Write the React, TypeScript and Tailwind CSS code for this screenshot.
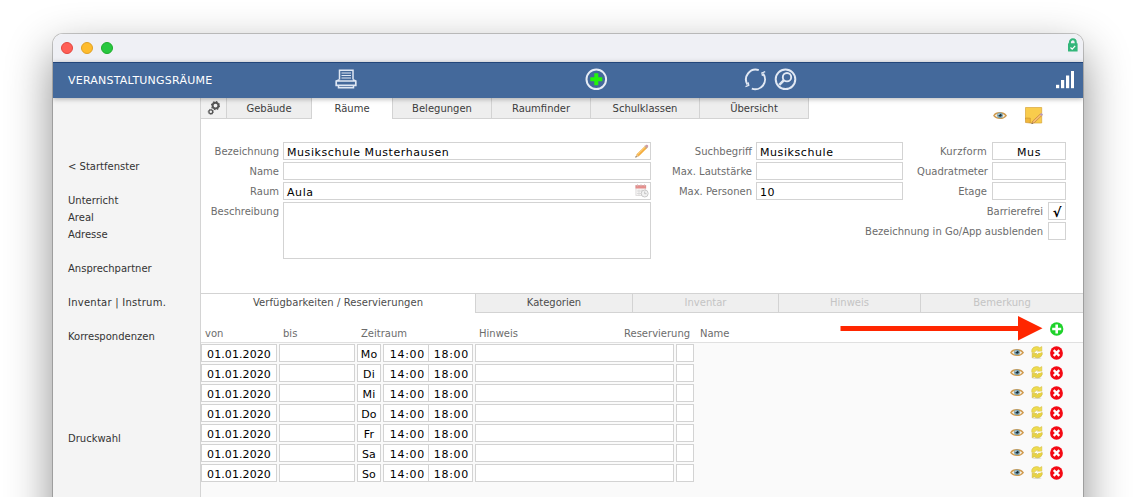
import React from "react";

const FONT = "font-['DejaVu_Sans',sans-serif]";

function Printer() {
  return (
    <svg className="-mt-[3px]" width="22" height="20" viewBox="0 0 22 20" fill="none" stroke="#dfe7f3" strokeWidth="1.5">
      <path d="M4.500 10.500V1.200h13.500V10.500" strokeWidth="1.500" />
      <path d="M6.500 4h9.500M6.500 6.500h9.500M6.500 9h9.500" strokeWidth="1.100" />
      <path d="M4.500 10.800L1.200 12v4.300h19.600V12L18 10.800M2 12h18" strokeWidth="1.700" />
      <path d="M3.500 16v2.700h15V16" />
    </svg>
  );
}

function Eye() {
  return (
    <svg width="14" height="9" viewBox="0 0 14 9">
      <path d="M.8 4.700C3 .8 10.500.8 13.200 4.600 10.500 8.400 3.500 8.400.8 4.700z" fill="#f4efe3" stroke="#cf9a4e" strokeWidth="1.300" />
      <circle cx="7" cy="4.300" r="2.900" fill="#7ba3b1" />
      <circle cx="7.200" cy="4.300" r="1.400" fill="#1c2d36" />
      <circle cx="6" cy="3.200" r=".7" fill="#d5e6ec" />
    </svg>
  );
}

function Sync() {
  return (
    <svg width="12" height="13" viewBox="0 0 12 13">
      <ellipse cx="6" cy="12.200" rx="4.500" ry=".8" fill="#dddcd0" />
      <path d="M.8 6.300V3.800Q2 .6 5.500.6 7.500.6 8.700 1.800L10.800.6V5.300H6.300L7.400 4.100Q4.800 3.200 4 6.300z" fill="#eedc50" stroke="#d6c045" strokeWidth=".6" />
      <path d="M11.200 6.500V8.600Q10 11.800 6.500 11.800 4.500 11.800 3.300 10.700L1.200 11.800V7.200H5.700L4.600 8.500Q7.200 9.500 8 6.500z" fill="#e8d343" stroke="#d0b93a" strokeWidth=".6" />
      <path d="M3.800 6.400h5l1.700-.6" fill="none" stroke="#fdfcf0" strokeWidth="1.100" />
    </svg>
  );
}

function Delete() {
  return (
    <svg width="13" height="14" viewBox="0 0 13 14">
      <ellipse cx="6.500" cy="7" rx="6.400" ry="6.800" fill="#f40a14" />
      <path d="M3.700 4.100l5.600 5.800M9.300 4.100L3.700 9.900" stroke="#fff" strokeWidth="2.300" />
    </svg>
  );
}

function Pencil() {
  return (
    <svg className="-mt-px" width="14" height="14" viewBox="0 0 14 14">
      <path d="M.5 13.500l1.300-3.500L10.500 1.500l2.200 2-8.600 8.500z" fill="#f4ac3d" />
      <path d="M2.500 10.700l8.500-8.400" stroke="#ffd581" strokeWidth="1" />
      <path d="M.5 13.500l1.100-3.300 2.200 2.100z" fill="#e5c69c" />
      <path d="M.4 13.600l.5-1.500 1 1z" fill="#444" />
      <path d="M10 2L11.200.8q1.200-.5 2.200 1.200L12.300 4z" fill="#cc9ba8" />
      <path d="M9.700 2.200l2.300 2.200" stroke="#a5abb5" />
    </svg>
  );
}

function Calendar() {
  return (
    <svg width="14" height="14" viewBox="0 0 14 14">
      <rect x=".9" y="1.500" width="9.800" height="10" fill="#f6f4f4" stroke="#dad8d8" strokeWidth=".8" />
      <path d="M.5 1.200h10.600v3.400H.5z" fill="#e58e8c" />
      <path d="M2.500.4v2M6 .4v2M9.500.4v2" stroke="#d3b6b6" />
      <path d="M2 7h8M2 9.500h8M4 5.500v6M7 5.500v6" stroke="#d2d2d2" strokeWidth=".7" />
      <circle cx="9.700" cy="9.500" r="3.500" fill="#f1f1f1" stroke="#c9c9c9" />
      <path d="M9.700 7.500v2.200h1.800" fill="none" stroke="#b5b5b5" strokeWidth=".8" />
    </svg>
  );
}

function Note() {
  return (
    <svg width="19" height="18" viewBox="0 0 19 18">
      <path d="M.5.500h16.200v15.500H5L.5 12z" fill="#f9cc4c" stroke="#d9a63b" strokeWidth=".7" />
      <path d="M.5 11l4.800.2V16L.5 15.500z" fill="#f0b73a" stroke="#c98f2a" strokeWidth=".6" />
      <path d="M6.800 16.600l1-2.600 7.500-7 1.500 1.500-7.400 7.100z" fill="#f6bd70" stroke="#b8753a" strokeWidth=".6" />
      <path d="M14.800 7.200l1.400-1.300 1.900 1.500-1.500 1.700z" fill="#b79bbf" />
      <path d="M6.500 17l.5-1.300.9.800z" fill="#444" />
    </svg>
  );
}

function Gears() {
  return (
    <svg width="14" height="15" viewBox="0 0 14 15" fill="none" stroke="#555">
      <circle cx="8.500" cy="4.600" r="2.900" strokeWidth="1.900" />
      <circle cx="8.500" cy="4.600" r="4" strokeWidth="1.100" strokeDasharray="1.570 1.570" />
      <circle cx="3.800" cy="10.800" r="1.900" strokeWidth="1.300" />
      <circle cx="3.800" cy="10.800" r="2.700" strokeWidth=".7" strokeDasharray="1.060 1.060" />
    </svg>
  );
}

function AddCircle() {
  return (
    <svg className="-mt-[3px]" width="24" height="24" viewBox="0 0 24 24">
      <circle cx="12.300" cy="12.300" r="9.800" fill="none" stroke="#e6ecf5" strokeWidth="2" />
      <path d="M12.300 6.300v12M6.300 12.300h12" stroke="#23f50a" strokeWidth="4" />
    </svg>
  );
}

function RefreshCircle() {
  return (
    <svg className="-mt-[3px]" width="24" height="24" viewBox="0 0 24 24" fill="none" stroke="#e1e8f3" strokeWidth="2">
      <path d="M4.200 17.500A9.800 9.800 0 0 1 15.500 3M19.800 6.500A9.800 9.800 0 0 1 8.500 21.500" transform="translate(.3 .1)" />
      <path d="M2.500 19.600l3.300-1.200-.6-3M22.200 4.700l-3.300 1.200.6 3" strokeWidth="1.300" />
    </svg>
  );
}

function SearchCircle() {
  return (
    <svg className="-mt-[3px]" width="24" height="24" viewBox="0 0 24 24" fill="none" stroke="#e1e8f3">
      <circle cx="12.500" cy="12.300" r="9.800" strokeWidth="2" />
      <circle cx="14" cy="10.200" r="4.200" strokeWidth="1.900" />
      <path d="M11 13.100l-4.700 4.800" strokeWidth="2.600" />
    </svg>
  );
}

function Signal() {
  return (
    <svg className="-mt-[2px]" width="19" height="18" viewBox="0 0 19 18" fill="#fff">
      <rect x="0" y="13.800" width="3.200" height="3.400" />
      <rect x="5" y="9" width="3.200" height="8.200" />
      <rect x="10" y="4.500" width="3.200" height="12.700" />
      <rect x="15" y="0" width="3" height="17.200" />
    </svg>
  );
}

function Lock() {
  return (
    <svg className="-mt-px" width="10" height="14" viewBox="0 0 10 14">
      <path d="M1.900 6V4.200a2.900 2.900 0 0 1 5.800 0V6" fill="none" stroke="#33b67a" strokeWidth="2.100" />
      <rect x="0" y="5.200" width="9.600" height="8.300" rx=".5" fill="#33b67a" />
      <path d="M2.500 9.500l1.700 1.700 3-3.400" fill="none" stroke="#fff" strokeWidth="1.200" />
    </svg>
  );
}

type FieldProps = { className?: string; text?: string; value?: string; children?: React.ReactNode };

function Field({ className = "", text = "text-[11px]", value, children }: FieldProps) {
  return (
    <div className={`flex h-[18px] shrink-0 items-center overflow-hidden border border-[#d3d3d3] bg-white text-black ${className}`}>
      {value && <span className={`mt-[3px] leading-[16px] whitespace-nowrap ${text}`}>{value}</span>}
      {children}
    </div>
  );
}

const WIDE = "text-[11px] tracking-[0.58px]";

function Label({ children, className = "pr-[4px]" }: { children: string; className?: string }) {
  return <div className={`flex-1 pt-px text-right text-[10px] leading-[17px] whitespace-nowrap text-[#6c6c6c] ${className}`}>{children}</div>;
}

const tabs = [
  { name: "Gebäude", cls: "w-[85px] border-r border-b bg-[#eeeeee]" },
  { name: "Räume", cls: "w-[80px] bg-white" },
  { name: "Belegungen", cls: "w-[100px] border-x border-b bg-[#eeeeee]" },
  { name: "Raumfinder", cls: "w-[99px] border-r border-b bg-[#eeeeee]" },
  { name: "Schulklassen", cls: "w-[109px] border-r border-b bg-[#eeeeee]" },
  { name: "Übersicht", cls: "w-[109px] border-r border-b bg-[#eeeeee]" },
];

const subTabs = [
  { name: "Verfügbarkeiten / Reservierungen", cls: "w-[274px] bg-white text-[#4c4c4c] tracking-[0.06px]" },
  { name: "Kategorien", cls: "w-[157px] border-l border-b bg-[#efefef] text-[#4c4c4c]" },
  { name: "Inventar", cls: "w-[146px] border-l border-b bg-[#efefef] text-[#c4c4c4]" },
  { name: "Hinweis", cls: "w-[142px] border-l border-b bg-[#efefef] text-[#c4c4c4]" },
  { name: "Bemerkung", cls: "w-[163px] border-l border-b bg-[#efefef] text-[#c4c4c4]" },
];

const side = [
  { name: "< Startfenster", cls: "mt-[60px]" },
  { name: "Unterricht", cls: "mt-[17px]" },
  { name: "Areal", cls: "" },
  { name: "Adresse", cls: "" },
  { name: "Ansprechpartner", cls: "mt-[17px]" },
  { name: "Inventar | Instrum.", cls: "mt-[17px] tracking-[0.25px]" },
  { name: "Korrespondenzen", cls: "mt-[17px]" },
  { name: "Druckwahl", cls: "mt-[85px]" },
];

const days = ["Mo", "Di", "Mi", "Do", "Fr", "Sa", "So"];

export default function App() {
  return (
    <div className={`h-[497px] w-[1139px] overflow-hidden bg-white pt-[34px] pl-[53px] ${FONT}`}>
      <div className="h-[530px] w-[1030px] rounded-t-[10px] shadow-[0_0_0_1px_rgba(0,0,0,0.2),0_18px_46px_rgba(0,0,0,0.46)]">
        <div className="flex h-full flex-col overflow-hidden rounded-t-[10px] bg-white">
          <div className="flex h-[28px] shrink-0 items-center bg-[#eff0f5] pr-[5px] pl-[8px]">
            <div className="flex flex-1 gap-[8px]">
              <span className="size-[12px] rounded-full border border-[#e2463f] bg-[#ff5f57]" />
              <span className="size-[12px] rounded-full border border-[#e0a024] bg-[#febc2e]" />
              <span className="size-[12px] rounded-full border border-[#1dac2b] bg-[#28c840]" />
            </div>
            <div className="-mt-[6px]"><Lock /></div>
          </div>
          <div className="z-10 flex h-[36px] shrink-0 items-center border-t border-[#23467a] bg-[#44699b] pl-[15px] shadow-[0_1px_5px_rgba(0,0,0,0.3)]">
            <div className="w-[267px] pt-px text-[11px] tracking-[0.22px] text-white">VERANSTALTUNGSRÄUME</div>
            <div className="w-[249px]"><Printer /></div>
            <div className="w-[159px]"><AddCircle /></div>
            <div className="flex flex-1 gap-[6px]"><RefreshCircle /><SearchCircle /></div>
            <div className="pr-[8px]"><Signal /></div>
          </div>
          <div className="flex min-h-0 flex-1">
            <div className="flex w-[148px] shrink-0 flex-col border-r border-[#d4d4d4] bg-[#f4f4f4] pl-[15px] text-[10px] leading-[17px] text-[#333]">
              {side.map((s) => <div key={s.name} className={`whitespace-nowrap ${s.cls}`}>{s.name}</div>)}
            </div>
            <div className="flex w-[882px] flex-col">
              <div className="flex h-[44px] shrink-0">
                <div className="flex h-[21px] w-[26px] justify-center border-r border-b border-[#d3d3d3] bg-[#f1f1f1] pt-[3px]"><Gears /></div>
                {tabs.map((t) => (
                  <div key={t.name} className={`h-[21px] border-[#d3d3d3] text-center text-[10px] leading-[21px] text-[#3c3c3c] ${t.cls}`}>{t.name}</div>
                ))}
                <div className="flex flex-1 gap-[18px] pt-[9px] pl-[184px]">
                  <div className="pt-[4px]"><Eye /></div>
                  <Note />
                </div>
              </div>
              <div className="flex h-[151px] shrink-0">
                <div className="flex w-[450px] flex-col gap-[2px]">
                  <div className="flex"><Label>Bezeichnung</Label><Field className="w-[368px] justify-between pr-px pl-[3px]" text={WIDE} value="Musikschule Musterhausen"><Pencil /></Field></div>
                  <div className="flex"><Label>Name</Label><Field className="w-[368px]" /></div>
                  <div className="flex"><Label>Raum</Label><Field className="w-[368px] justify-between pr-px pl-[3px]" text={WIDE} value="Aula"><Calendar /></Field></div>
                  <div className="flex"><Label>Beschreibung</Label><div className="h-[57px] w-[368px] border border-[#d3d3d3]" /></div>
                </div>
                <div className="flex w-[252px] flex-col gap-[2px]">
                  <div className="flex"><Label>Suchbegriff</Label><Field className="w-[147px] pl-[3px]" text={WIDE} value="Musikschule" /></div>
                  <div className="flex"><Label>Max. Lautstärke</Label><Field className="w-[147px]" /></div>
                  <div className="flex"><Label>Max. Personen</Label><Field className="w-[147px] pl-[3px]" text={WIDE} value="10" /></div>
                </div>
                <div className="-ml-[60px] flex w-[223px] flex-col gap-[2px]">
                  <div className="flex"><Label className="pr-[5px] tracking-[0.25px]">Kurzform</Label><Field className="w-[74px] justify-center" text={WIDE} value="Mus" /></div>
                  <div className="flex"><Label className="pr-[4px]">Quadratmeter</Label><Field className="w-[74px]" /></div>
                  <div className="flex"><Label className="pr-[5px]">Etage</Label><Field className="w-[74px]" /></div>
                  <div className="flex"><Label className="pr-[5px]">Barrierefrei</Label><Field className="w-[18px] justify-center font-bold" text="text-[13px]" value="√" /></div>
                  <div className="flex"><Label className="pr-[5px]">Bezeichnung in Go/App ausblenden</Label><Field className="w-[18px]" /></div>
                </div>
              </div>
              <div className="flex h-[20px] shrink-0 border-t border-[#d3d3d3]">
                {subTabs.map((t) => (
                  <div key={t.name} className={`border-[#d3d3d3] text-center text-[10px] leading-[18px] whitespace-nowrap ${t.cls}`}>{t.name}</div>
                ))}
              </div>
              <div className="flex h-[30px] shrink-0 items-start border-b border-[#e0e0e0] pl-[4px] text-[10px] leading-[12px] text-[#6c6c6c]">
                <div className="w-[78px] pt-[15px]">von</div>
                <div className="w-[78px] pt-[15px]">bis</div>
                <div className="w-[118px] pt-[15px]">Zeitraum</div>
                <div className="w-[145px] pt-[15px]">Hinweis</div>
                <div className="w-[76px] pt-[15px]">Reservierung</div>
                <div className="w-[140px] pt-[15px]">Name</div>
                <svg className="mt-[3px]" width="204" height="26" viewBox="0 0 204 26">
                  <path d="M.5 10h177.500V0L202.500 12.300 178 24.600V15H.5z" fill="#ff2600" />
                </svg>
                <svg className="mt-[9px] ml-[6px]" width="14" height="14" viewBox="0 0 14 14">
                  <circle cx="6.700" cy="7" r="6.700" fill="#1fd22b" />
                  <path d="M6.700 2.500v9M2.200 7h9" stroke="#fff" strokeWidth="2.600" />
                </svg>
              </div>
              <div className="flex flex-1 flex-col gap-[2px] bg-[#fafafa] pt-px">
                {days.map((d) => (
                  <div key={d} className="flex h-[18px] shrink-0">
                    <Field className="w-[76px] justify-center" text="text-[11px] tracking-[0.08px]" value="01.01.2020" />
                    <Field className="ml-[2px] w-[76px]" />
                    <Field className="ml-[2px] w-[24px] justify-center" text="text-[11px] tracking-[0.2px]" value={d} />
                    <Field className="ml-[2px] w-[46px] justify-end pr-[3px]" text="text-[11px] tracking-[0.7px]" value="14:00" />
                    <Field className="w-[44px] justify-end border-l-0 pr-[3px]" text="text-[11px] tracking-[0.7px]" value="18:00" />
                    <Field className="ml-[2px] w-[199px]" />
                    <Field className="ml-[2px] w-[18px]" />
                    <div className="ml-[316px] pt-[4px]"><Eye /></div>
                    <div className="ml-[7px] pt-[2px]"><Sync /></div>
                    <div className="ml-[7px] pt-[2px]"><Delete /></div>
                  </div>
                ))}
              </div>
            </div>
          </div>
        </div>
      </div>
    </div>
  );
}
